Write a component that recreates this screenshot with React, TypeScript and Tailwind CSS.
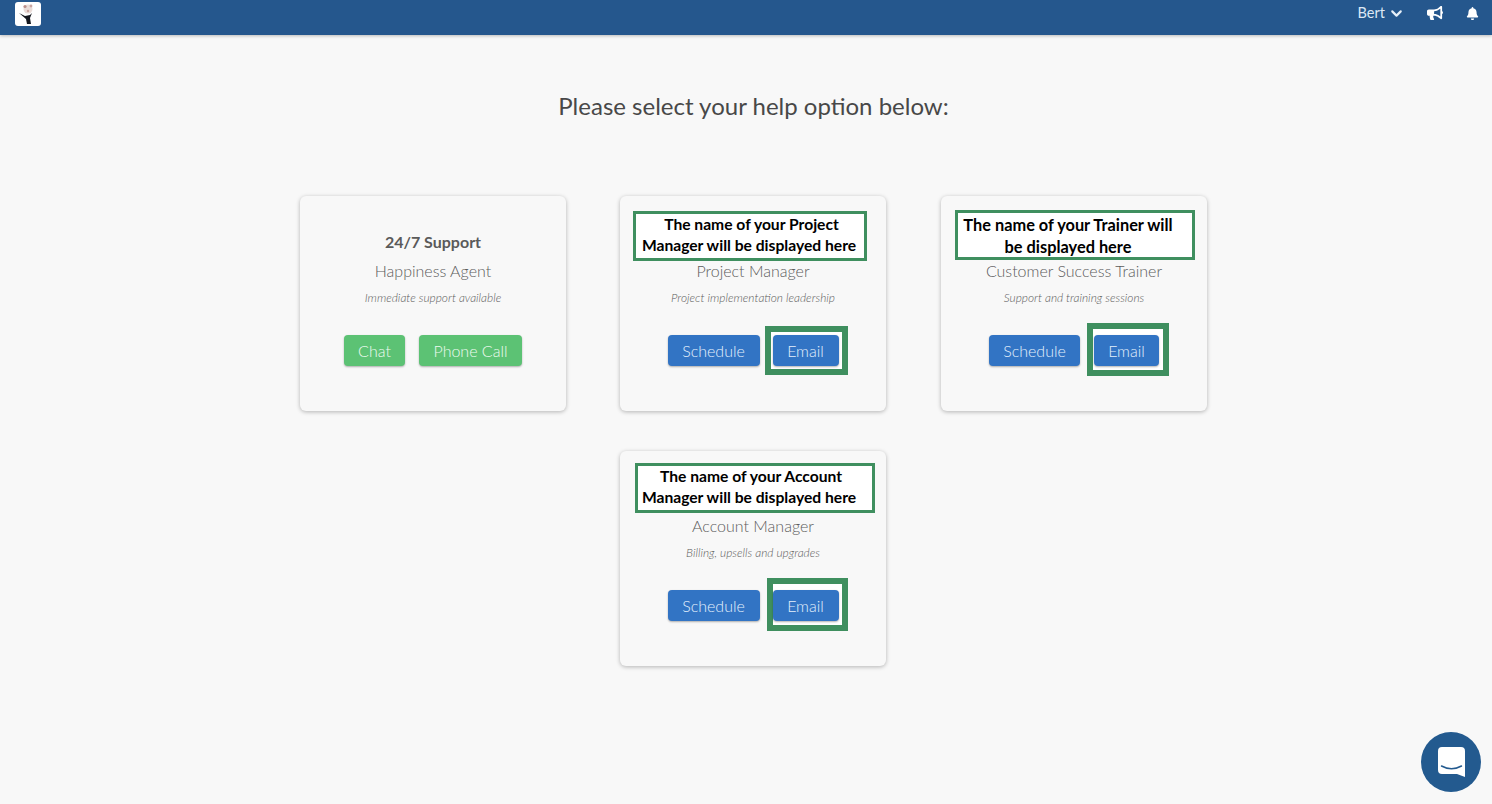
import { ChevronDown } from "lucide-react";
import { FaBell, FaBullhorn } from "react-icons/fa";

const Logo = () => (
  <div className="ml-[15px] mt-[2px] flex h-[24px] w-[26px] items-center justify-center rounded-[3px] bg-white">
    <svg width="22" height="22" viewBox="0 0 22 22">
      <circle cx="11" cy="6" r="4.5" fill="#eadcd8" />
      <circle cx="8" cy="3.5" r="1.6" fill="#b98f8a" />
      <circle cx="14" cy="3" r="1.4" fill="#c9a5a0" />
      <circle cx="11" cy="8" r="1.2" fill="#c9a5a0" />
      <path d="M2 10 L8 13 L13 12 L15 10 L13 15 L14 21 L10 21 L9 16 Z" fill="#14181f" />
    </svg>
  </div>
);

const Header = () => (
  <header className="flex h-[35px] items-center justify-between bg-[#25578d] pb-[9px] shadow-[0_1px_3px_rgba(0,0,0,0.25)]">
    <Logo />
    <div className="flex items-center text-white">
      <span className="text-[14.5px] text-[#dce8f5]">Bert</span>
      <ChevronDown size={17} strokeWidth={3} className="ml-[3px] text-[#e6eff8]" />
      <FaBullhorn size={16} className="ml-[22px]" />
      <FaBell size={13} className="ml-[23px] mr-[13px]" />
    </div>
  </header>
);

const Button = ({ label, green }: { label: string; green?: boolean }) => (
  <span
    className={`relative flex h-[31px] items-center justify-center rounded-[4px] text-[16px] font-light shadow-[0_1px_2px_rgba(0,0,0,0.3)] ${
      green ? "bg-[#5cc274] text-[#eefaf0]" : "bg-[#3274c4] text-[#e4f0fc]"
    }`}
  >
    {label}
  </span>
);

interface HelpCard {
  title?: string;
  role: string;
  desc: string;
  note?: React.ReactNode;
  noteClass?: string;
  frameClass?: string;
  gapClass: string;
  widths: string[];
  labels: string[];
  green?: boolean;
}

const cards: HelpCard[] = [
  {
    title: "24/7 Support",
    role: "Happiness Agent",
    desc: "Immediate support available",
    gapClass: "gap-[14px]",
    widths: ["w-[61px]", "w-[103px]"],
    labels: ["Chat", "Phone Call"],
    green: true,
  },
  {
    role: "Project Manager",
    desc: "Project implementation leadership",
    note: (
      <>
        <span className="pl-[5px]">The name of your Project</span>
        <br />
        Manager will be displayed here
      </>
    ),
    noteClass: "left-[13px] top-[15px] w-[234px] h-[50px] pr-[2px] pb-[2px] text-[15.65px] leading-[21.5px]",
    frameClass: "-left-[8px] -right-[9px] -top-[9px] -bottom-[9px]",
    gapClass: "gap-[13px]",
    widths: ["w-[92px]", "w-[66px]"],
    labels: ["Schedule", "Email"],
  },
  {
    role: "Customer Success Trainer",
    desc: "Support and training sessions",
    note: (
      <>
        The name of your Trainer will
        <br />
        be displayed here
      </>
    ),
    noteClass: "left-[14px] top-[14px] w-[240px] h-[50px] pr-[14px] pt-[2px] text-[16.35px] leading-[22px]",
    frameClass: "-left-[7px] -right-[10px] -top-[12px] -bottom-[10px]",
    gapClass: "gap-[14px]",
    widths: ["w-[91px]", "w-[65px]"],
    labels: ["Schedule", "Email"],
  },
  {
    role: "Account Manager",
    desc: "Billing, upsells and upgrades",
    note: (
      <>
        <span className="pl-[4px]">The name of your Account</span>
        <br />
        Manager will be displayed here
      </>
    ),
    noteClass: "left-[15px] top-[12px] w-[240px] h-[50px] pr-[12px] pb-[2px] text-[15.65px] leading-[21.5px]",
    frameClass: "-left-[6px] -right-[9px] -top-[12px] -bottom-[10px]",
    gapClass: "gap-[13px]",
    widths: ["w-[92px]", "w-[66px]"],
    labels: ["Schedule", "Email"],
  },
];

const Card = ({ card, className = "" }: { card: HelpCard; className?: string }) => (
  <div
    className={`relative flex h-[215px] w-[266px] flex-col items-center rounded-[6px] bg-[#f8f8f8] pt-[35px] shadow-[0_1px_4px_rgba(0,0,0,0.28)] ${className}`}
  >
    <div className="h-[21px] text-[16px] font-bold leading-[21px] text-[#5a5a5a]">{card.title}</div>
    <div className="mt-[8px] text-[16px] font-light leading-[22px] text-[#5c5c5c]">{card.role}</div>
    <div className="mt-[9px] text-[11.9px] font-light italic leading-[14px] text-[#5c5c5c]">{card.desc}</div>
    <div className={`mt-[30px] flex ${card.gapClass}`}>
      {card.labels.map((label, index) => (
        <div key={label} className={`relative ${card.widths[index]}`}>
          {card.frameClass && index === 1 && (
            <div className={`absolute border-[6px] border-[#3f8f5f] bg-white ${card.frameClass}`} />
          )}
          <Button label={label} green={card.green} />
        </div>
      ))}
    </div>
    {card.note && (
      <div
        className={`absolute flex items-center justify-center border-[3px] border-[#3f8f5f] bg-white text-center font-bold text-black ${card.noteClass}`}
      >
        <div className="whitespace-nowrap">{card.note}</div>
      </div>
    )}
  </div>
);

const ChatBubble = () => (
  <div className="fixed bottom-[12px] right-[11px] flex h-[60px] w-[60px] items-center justify-center rounded-full bg-[#235a8f]">
    <svg width="27" height="30" viewBox="0 0 27 30">
      <path
        d="M4 0 H23 A4 4 0 0 1 27 4 V30 L19 27 H4 A4 4 0 0 1 0 23 V4 A4 4 0 0 1 4 0 Z"
        fill="#ffffff"
      />
      <path d="M3.5 19 Q13.5 24.5 23.5 19" fill="none" stroke="#235a8f" strokeWidth="1.5" strokeLinecap="round" />
    </svg>
  </div>
);

export default function App() {
  return (
    <div className="min-h-[804px] bg-[#f8f8f8] font-['Lato',sans-serif]">
      <Header />
      <main className="flex flex-col items-center pl-[15px]">
        <h1 className="mt-[54px] text-[24px] leading-[34px] text-[#484848]">
          Please select your help option below:
        </h1>
        <div className="mt-[73px] grid w-[907px] grid-cols-[320px_321px_266px] gap-y-[40px]">
          <Card card={cards[0]} />
          <Card card={cards[1]} />
          <Card card={cards[2]} />
          <Card card={cards[3]} className="col-start-2" />
        </div>
      </main>
      <ChatBubble />
    </div>
  );
}
